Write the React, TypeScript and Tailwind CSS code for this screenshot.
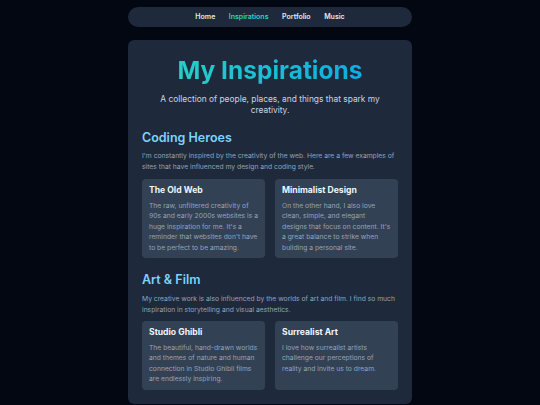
import React from "react";

const cards1 = [
  {
    t: "The Old Web",
    d: "The raw, unfiltered creativity of 90s and early 2000s websites is a huge inspiration for me. It's a reminder that websites don't have to be perfect to be amazing.",
  },
  {
    t: "Minimalist Design",
    d: "On the other hand, I also love clean, simple, and elegant designs that focus on content. It's a great balance to strike when building a personal site.",
  },
];
const cards2 = [
  {
    t: "Studio Ghibli",
    d: "The beautiful, hand-drawn worlds and themes of nature and human connection in Studio Ghibli films are endlessly inspiring.",
  },
  {
    t: "Surrealist Art",
    d: "I love how surrealist artists challenge our perceptions of reality and invite us to dream.",
  },
];

function Card({ t, d }: { t: string; d: string }) {
  return (
    <div className="rounded-[4px] bg-[#334155] px-[7px] pt-[6px] pb-[5px]">
      <h3 className="text-[8.6px] leading-[11px] font-bold text-[#f1f5f9]">{t}</h3>
      <p className="mt-[5px] text-[6.75px] leading-[10.4px] text-[#94a3b8]">{d}</p>
    </div>
  );
}

export default function App() {
  return (
    <div
      className="min-h-[405px] bg-[#030712] pt-[7px] flex flex-col items-center"
      style={{ fontFamily: "Inter, 'Noto Sans', sans-serif" }}
    >
      <nav className="w-[284px] h-[20px] rounded-full bg-[#1e293b] flex items-center justify-center gap-[13.5px] text-[7px] font-semibold">
        <span className="text-[#e2e8f0]">Home</span>
        <span className="text-[#2dd4bf]">Inspirations</span>
        <span className="text-[#e2e8f0]">Portfolio</span>
        <span className="text-[#e2e8f0]">Music</span>
      </nav>
      <main className="mt-[13px] w-[284px] rounded-[6px] bg-[#1e293b] px-[14px] pt-[14px] pb-[14px]">
        <h1 className="text-center text-[24.5px] leading-[32px] font-bold bg-gradient-to-r from-[#2dd4bf] to-[#0ea5e9] bg-clip-text text-transparent">
          My Inspirations
        </h1>
        <p className="mt-[8px] text-center text-[8.4px] leading-[11px] text-[#cbd5e1] px-[10px]">
          A collection of people, places, and things that spark my creativity.
        </p>
        <h2 className="mt-[13.5px] text-[12.5px] leading-[16px] font-semibold text-[#7dd3fc]">Coding Heroes</h2>
        <p className="mt-[4.5px] text-[6.75px] leading-[11px] text-[#94a3b8]">
          I'm constantly inspired by the creativity of the web. Here are a few examples of sites that have influenced my design and coding style.
        </p>
        <div className="mt-[7px] grid grid-cols-2 gap-[10px]">
          {cards1.map((c) => (
            <Card key={c.t} {...c} />
          ))}
        </div>
        <h2 className="mt-[13.5px] text-[12.5px] leading-[16px] font-semibold text-[#7dd3fc]">Art &amp; Film</h2>
        <p className="mt-[5.5px] text-[6.75px] leading-[11px] text-[#94a3b8]">
          My creative work is also influenced by the worlds of art and film. I find so much inspiration in storytelling and visual aesthetics.
        </p>
        <div className="mt-[6px] grid grid-cols-2 gap-[10px]">
          {cards2.map((c) => (
            <Card key={c.t} {...c} />
          ))}
        </div>
      </main>
    </div>
  );
}
